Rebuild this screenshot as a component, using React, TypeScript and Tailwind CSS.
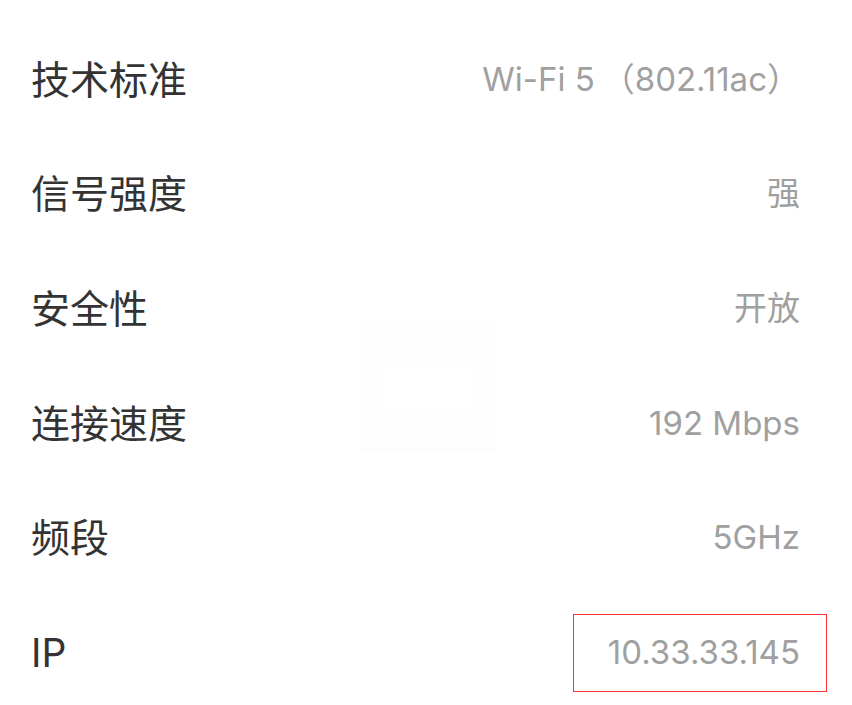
import React from "react";

const rows: { label: string; value: React.ReactNode }[] = [
  {
    label: "技术标准",
    value: (
      <>
        Wi-Fi 5<span className="ml-[7px]">（802.11ac）</span>
      </>
    ),
  },
  { label: "信号强度", value: "强" },
  { label: "安全性", value: "开放" },
  { label: "连接速度", value: "192 Mbps" },
  { label: "频段", value: "5GHz" },
  { label: "IP", value: "10.33.33.145" },
];

export default function App() {
  return (
    <div
      className="relative w-[852px] h-[705px] overflow-hidden bg-white pt-[22px]"
      style={{ fontFamily: 'Inter, "Noto Sans CJK SC", sans-serif' }}
    >
      <div className="absolute left-[360px] top-[322px] w-[135px] h-[130px] bg-[#fdfdfd]">
        <div className="ml-[23px] mt-[45px] w-[90px] h-[40px] bg-white" />
      </div>
      {rows.map((r, i) => (
        <div key={i} className="relative flex items-center justify-between h-[114.6px] pl-[31px] pr-[52px]">
          <span className="text-[39px] leading-none text-[#333333]">{r.label}</span>
          <span className="text-[33px] leading-none text-[#a0a0a0] whitespace-nowrap">{r.value}</span>
          {r.label === "IP" && (
            <div className="absolute left-[573px] top-[19px] w-[254px] h-[78px] border border-[#ff3333]" />
          )}
        </div>
      ))}
    </div>
  );
}
